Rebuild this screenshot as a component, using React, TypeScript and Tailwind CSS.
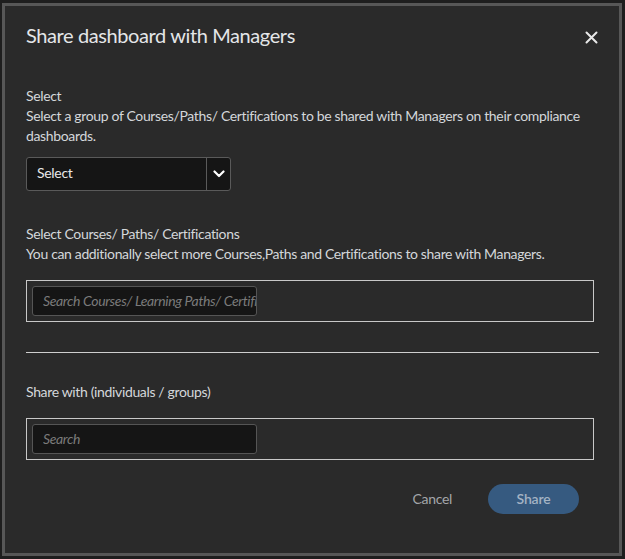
import React from "react";

function Chevron() {
  return (
    <svg width="12" height="8" viewBox="0 0 12 8" fill="none">
      <path d="M1.5 1.5L6 6L10.5 1.5" stroke="#ffffff" strokeWidth="2.2" strokeLinecap="round" strokeLinejoin="round" />
    </svg>
  );
}

function CloseIcon() {
  return (
    <svg width="13" height="13" viewBox="0 0 13 13" fill="none">
      <path d="M1.5 1.5L11.5 11.5M11.5 1.5L1.5 11.5" stroke="#e8e8e8" strokeWidth="2" strokeLinecap="round" />
    </svg>
  );
}

export default function App() {
  const font = { fontFamily: "Lato, 'Open Sans', sans-serif" };
  return (
    <div className="w-[625px] h-[559px] bg-[#1e1e1e] pt-[3px] pl-[2px]" style={font}>
      <div className="w-[620px] h-[553px] border-[3px] border-[#575757] bg-[#2a2a2a] flex flex-col pl-[21px] pr-[20px]">
        <div className="flex items-center justify-between mt-[15px] h-[28px]">
          <h1 className="text-[20px] leading-[28px] text-[#e4e6e8] tracking-[-0.4px]">Share dashboard with Managers</h1>
          <div className="mr-[1px] mt-[4px]"><CloseIcon /></div>
        </div>

        <div className="mt-[37px] text-[14px] leading-[20px] text-[#d4d7da] tracking-[-0.35px]">
          <div>Select</div>
          <div>Select a group of Courses/Paths/ Certifications to be shared with Managers on their compliance dashboards.</div>
        </div>
        <div className="mt-[11px] w-[205px] h-[34px] flex rounded-[3px] border border-[#5a5a5a] bg-[#151515]">
          <div className="flex-1 flex items-center pl-[10px] pb-[3px] text-[14px] text-[#e8e8e8] tracking-[-0.3px]">Select</div>
          <div className="w-[24px] border-l border-[#5a5a5a] flex items-center justify-center"><Chevron /></div>
        </div>

        <div className="mt-[33px] text-[14px] leading-[20px] text-[#d4d7da] tracking-[-0.35px]">
          <div>Select Courses/ Paths/ Certifications</div>
          <div>You can additionally select more Courses,Paths and Certifications to share with Managers.</div>
        </div>
        <div className="mt-[16px] w-[568px] h-[42px] border border-[#c8c8c8] p-[5px]">
          <input
            className="w-[225px] h-[30px] rounded-[3px] border border-[#555] bg-[#151515] pl-[10px] pb-[2px] text-[14px] italic text-[#cfcfcf] tracking-[-0.35px] outline-none placeholder:text-[#7b7b7b] placeholder:italic"
            style={font}
            placeholder="Search Courses/ Learning Paths/ Certifications"
          />
        </div>

        <div className="mt-[30px] h-[1px] bg-[#cfcfcf]" />

        <div className="mt-[29px] text-[14px] leading-[20px] text-[#d4d7da] tracking-[-0.35px]">Share with (individuals / groups)</div>
        <div className="mt-[16px] w-[568px] h-[42px] border border-[#c8c8c8] p-[5px]">
          <input
            className="w-[225px] h-[30px] rounded-[3px] border border-[#555] bg-[#151515] pl-[10px] pb-[2px] text-[14px] italic text-[#cfcfcf] tracking-[-0.35px] outline-none placeholder:text-[#7b7b7b] placeholder:italic"
            style={font}
            placeholder="Search"
          />
        </div>

        <div className="mt-[24px] flex items-center justify-end pr-[20px]">
          <span className="text-[14px] text-[#a3a6a9] mr-[36px] mb-[2px] tracking-[-0.3px]">Cancel</span>
          <div className="w-[91px] h-[30px] rounded-full bg-[#365a80] flex items-center justify-center pb-[1px] text-[14px] text-[#a4b3c4] font-semibold tracking-[-0.2px]">Share</div>
        </div>
      </div>
    </div>
  );
}
